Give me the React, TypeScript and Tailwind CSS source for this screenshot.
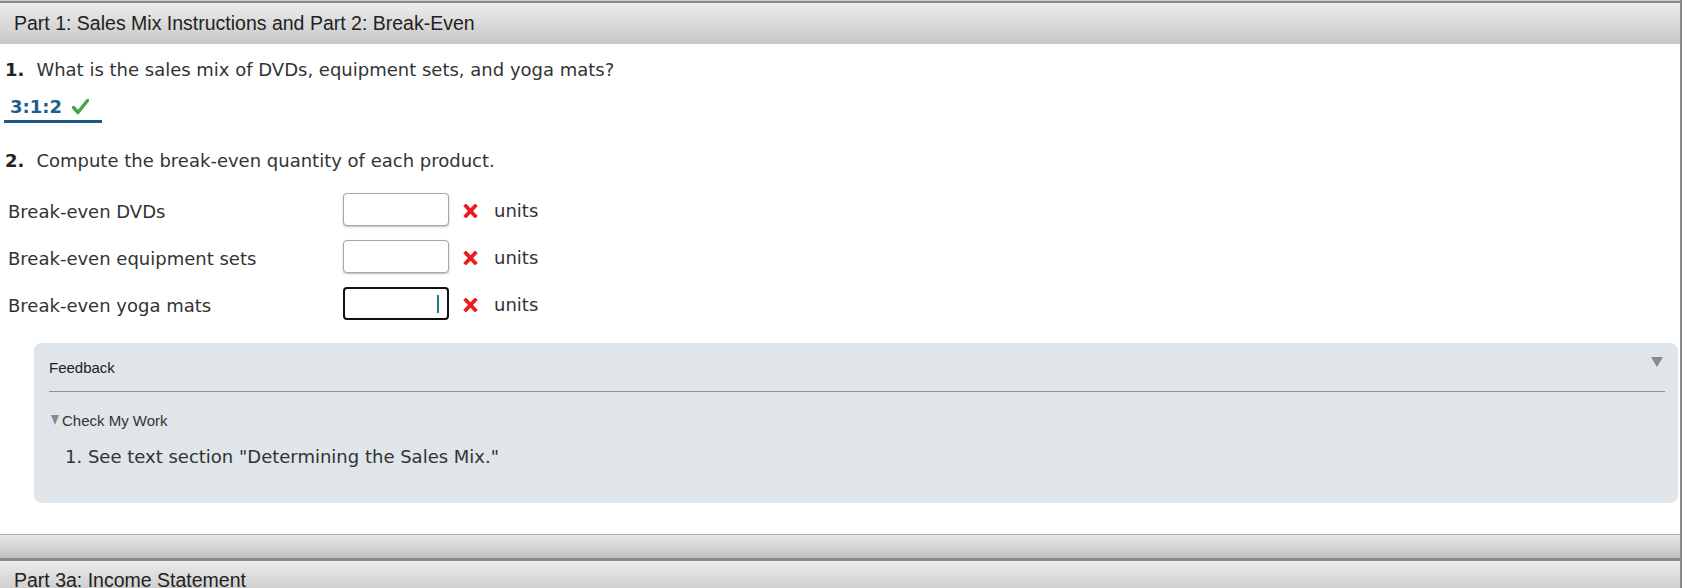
import React from "react";

const verdana = "font-['DejaVu_Sans',Verdana,sans-serif]";
const arial = "font-['Liberation_Sans',Arial,sans-serif]";

function Row({ label, active }: { label: string; active?: boolean }) {
  return (
    <div className="flex h-[33px] items-center">
      <div className={`w-[343px] pl-[8px] pt-[4px] text-[18px] leading-[26px] text-[#333] ${verdana}`}>{label}</div>
      {active ? (
        <div className="relative h-[33px] w-[106px] rounded-[4px] border-2 border-[#111] bg-white">
          <div className="absolute right-[8px] top-[6px] h-[18px] w-[2px] bg-[#1b7f8e]" />
        </div>
      ) : (
        <div className="h-[33px] w-[106px] rounded-[4px] border border-[#a6a6a6] bg-white shadow-[0_1px_2px_rgba(0,0,0,0.25)]" />
      )}
      <svg className="ml-[14px] mt-[2px]" width="15" height="14" viewBox="0 0 15 14">
        <path d="M1.6 0.8 L13.4 13.2 M13.4 0.8 L1.6 13.2" fill="none" stroke="#ec1c1c" strokeWidth="3.8" strokeLinecap="butt" />
      </svg>
      <span className={`ml-[16px] pt-[2px] text-[18px] leading-[26px] text-[#333] ${verdana}`}>units</span>
    </div>
  );
}

export default function App() {
  return (
    <div className="h-[588px] w-[1683px] overflow-hidden bg-white">
      <div className="w-[1682px] border-r-2 border-[#8a8a8a]">
        <div className="h-[1px] bg-[#cfcfcf]" />
        <div className="h-[2px] bg-[#8a8a8a]" />
        <div className={`flex h-[41px] items-center bg-gradient-to-b from-[#ededed] to-[#c8c8c8] pl-[14px] text-[19.5px] text-[#222] ${arial}`}>
          Part 1: Sales Mix Instructions and Part 2: Break-Even
        </div>

        <div className={`mt-[13px] pl-[5px] text-[18px] leading-[26px] text-[#333] ${verdana}`}>
          <span className="mr-[12px] font-bold text-[#222]">1.</span>
          What is the sales mix of DVDs, equipment sets, and yoga mats?
        </div>

        <div className="ml-[4px] mt-[11px] flex w-[98px] items-center border-b-[3px] border-[#1b5a86] pl-[6px]">
          <span className={`text-[18px] font-bold leading-[26px] text-[#1d5f8c] ${verdana}`}>3:1:2</span>
          <svg className="ml-[10px]" width="17" height="16" viewBox="0 0 17 16">
            <path d="M1.5 8.5 L6 13.5 L15.5 1.5" fill="none" stroke="#45a447" strokeWidth="3.4" strokeLinecap="round" strokeLinejoin="round" />
          </svg>
        </div>

        <div className={`mt-[25px] pl-[5px] text-[18px] leading-[26px] text-[#333] ${verdana}`}>
          <span className="mr-[12px] font-bold text-[#222]">2.</span>
          Compute the break-even quantity of each product.
        </div>

        <div className="mt-[19px] flex flex-col gap-[14px]">
          <Row label="Break-even DVDs" />
          <Row label="Break-even equipment sets" />
          <Row label="Break-even yoga mats" active />
        </div>

        <div className="ml-[34px] mr-[2px] mt-[23px] h-[160px] rounded-[8px] bg-[#dfe5e8] pl-[15px] pr-[13px]">
          <div className="flex items-start justify-between pt-[15px]">
            <span className={`text-[15px] leading-[20px] text-[#222] ${arial}`}>Feedback</span>
            <svg className="mr-[2px] mt-[-1px]" width="12" height="10" viewBox="0 0 12 10">
              <path d="M0 0 H12 L6 10 Z" fill="#8a8a8a" />
            </svg>
          </div>
          <div className="mt-[13px] h-[1px] bg-[#8f8f8f]" />
          <div className={`mt-[19px] flex items-center text-[15px] leading-[20px] text-[#333] ${arial}`}>
            <svg className="ml-[2px] mr-[3px] mt-[-3px]" width="8" height="10" viewBox="0 0 8 10">
              <path d="M0 0 H8 L4 10 Z" fill="#8a8a8a" />
            </svg>
            Check My Work
          </div>
          <div className={`ml-[16px] mt-[13px] text-[18px] leading-[26px] text-[#333] ${verdana}`}>
            1. See text section "Determining the Sales Mix."
          </div>
        </div>

        <div className="mt-[31px] h-[1px] bg-[#ababab]" />
        <div className="h-[23px] bg-gradient-to-b from-[#e8e8e8] to-[#c2c2c2]" />
        <div className="h-[3px] bg-[#8a8a8a]" />
        <div className={`flex h-[34px] items-start bg-gradient-to-b from-[#ededed] to-[#c8c8c8] pl-[14px] pt-[5px] text-[19.5px] text-[#222] ${arial}`}>
          Part 3a: Income Statement
        </div>
      </div>
    </div>
  );
}
